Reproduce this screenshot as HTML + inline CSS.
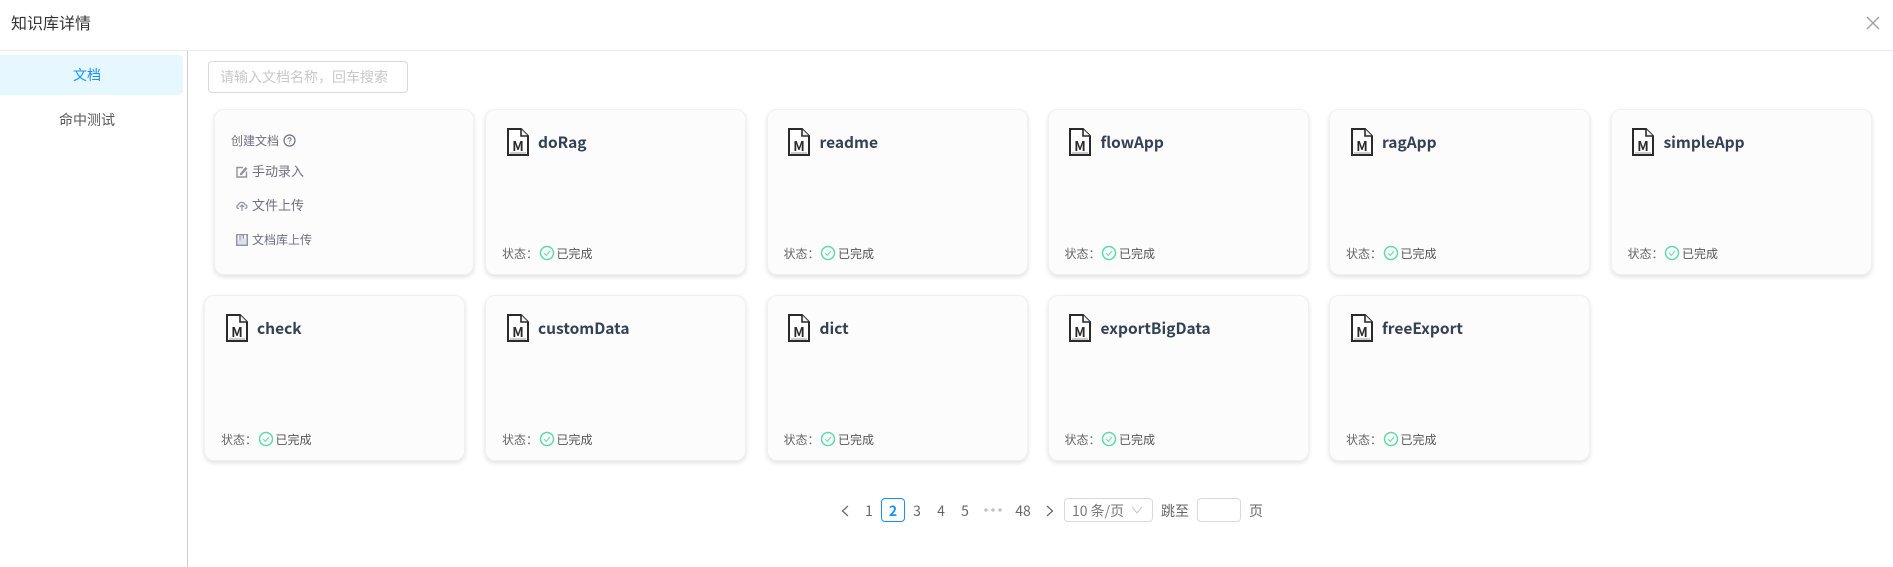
<!DOCTYPE html>
<html lang="zh"><head><meta charset="utf-8"><title>知识库详情</title>
<style>
*{box-sizing:border-box}
html,body{margin:0;padding:0;width:1893px;height:567px;overflow:hidden;background:#fff}
body{position:relative;font-family:"Noto Sans CJK SC","Liberation Sans",sans-serif;color:#555}
.a{position:absolute;white-space:nowrap;line-height:20px}
.card{position:absolute;width:261px;height:166px;background:#fcfcfc;border:1px solid #f0f0f0;border-radius:10px;box-shadow:0 2px 5px rgba(0,0,0,.12)}
.card svg.d{position:absolute;left:20.5px;top:18px}
.card .t{position:absolute;left:52px;top:20.5px;font-size:15.5px;font-weight:700;line-height:22px;color:#344054;white-space:nowrap}
.card .s{position:absolute;left:16px;top:134px;font-size:12px;line-height:20px;color:#666;white-space:nowrap}
.card .k{position:absolute;left:52.5px;top:135px;width:16px;height:16px}
.card .c{position:absolute;left:70.5px;top:134px;font-size:12px;line-height:20px;color:#555;white-space:nowrap}
.p{position:absolute;top:501px;font-size:14px;line-height:20px;color:#666;transform:translateX(-50%)}
.b{position:absolute;border:1px solid #d9d9d9;border-radius:4px;background:#fff}
.m{position:absolute;font-size:13px;line-height:20px;color:#6d7080;white-space:nowrap}
</style></head><body>
<svg width="0" height="0" style="position:absolute"><defs>
<symbol id="doc" viewBox="0 0 22 28"><path d="M1 1H14L21 8V27H1Z" fill="#fff" stroke="#2a2a2a" stroke-width="2"/><path d="M14 1V8H21" fill="#f4f4f4" stroke="#2a2a2a" stroke-width="1.6"/><path d="M3 25H19" stroke="#bbb" stroke-width="1.5"/></symbol>
<symbol id="ok" viewBox="0 0 16 16"><circle cx="8" cy="8" r="6.5" fill="none" stroke="#5fd8ac" stroke-width="1.5"/><path d="M5 8.2L7.3 10.4 11 5.9" fill="none" stroke="#5fd8ac" stroke-width="1"/></symbol>
</defs></svg>

<div class="a" style="left:11px;top:12px;font-size:16px;color:#333">知识库详情</div>
<svg class="a" style="left:1866px;top:16px" width="14" height="14" viewBox="0 0 14 14"><path d="M1 1L13 13M13 1L1 13" stroke="#a0a0a0" stroke-width="1.4" fill="none"/></svg>
<div class="a" style="left:0;top:50px;width:1893px;height:1px;background:#ececec"></div>
<div class="a" style="left:187px;top:51px;width:1px;height:516px;background:#d0d0d0"></div>

<div class="a" style="left:0;top:55px;width:183px;height:40px;background:#e6f7ff;border-radius:0 4px 4px 0"></div>
<div class="a" style="left:73px;top:65px;font-size:14px;color:#1890ff">文档</div>
<div class="a" style="left:59px;top:110px;font-size:14px;color:#595959">命中测试</div>

<div class="b" style="left:208px;top:61px;width:200px;height:32px"></div>
<div class="a" style="left:220px;top:67px;font-size:14px;color:#c8c8c8">请输入文档名称，回车搜索</div>

<!-- Create card -->
<div class="card" style="left:214px;top:109px;width:260px">
  <div class="a" style="left:16px;top:21px;font-size:12px;color:#6d7080">创建文档</div>
  <svg class="a" style="left:68px;top:24px" width="13" height="13" viewBox="0 0 13 13"><circle cx="6.5" cy="6.5" r="5.5" fill="none" stroke="#6d7080" stroke-width="1.2"/><path d="M4.9 5.2C4.9 3.2 8.1 3.2 8.1 5.2C8.1 6.4 6.5 6.3 6.5 7.7M6.5 8.8V9.8" fill="none" stroke="#6d7080"/></svg>
  <svg class="a" style="left:21px;top:56px" width="12" height="12" viewBox="0 0 12 12"><path d="M7 1.5H1V11H10.5V5.5" fill="none" stroke="#8f93a3" stroke-width="1.4"/><path d="M4 7.5L9.5 1L11.5 2.6L5.8 9L3.9 9.3Z" fill="#8f93a3"/></svg>
  <div class="m" style="top:51px;left:37px">手动录入</div>
  <svg class="a" style="left:21px;top:90px" width="12" height="12" viewBox="0 0 12 12"><path d="M3 8.5H2.6C.2 8.3.2 5 2.6 4.8C3.2 1.6 8.4 1.6 9 4.8C11.6 5 11.6 8.3 9 8.5H8.8M3.8 7L6 4.9L8.2 7M6 5V11" fill="none" stroke="#8f93a3" stroke-width="1.2"/></svg>
  <div class="m" style="top:85px;left:37px">文件上传</div>
  <svg class="a" style="left:21px;top:124px" width="12" height="12" viewBox="0 0 12 12"><rect x=".7" y=".7" width="10.6" height="10.6" fill="#dfe1e8" stroke="#8f93a3" stroke-width="1.4"/><path d="M2 6.5V1H10V4.5H7.5V1H5V6.5Z" fill="#fcfcfc"/><path d="M4 1V6.5M7.5 1V4.5" stroke="#8f93a3" stroke-width="1.2"/></svg>
  <div class="m" style="top:120px;left:37px;font-size:12px">文档库上传</div>
</div>

<!-- Row 1 -->
<div class="card" style="left:485px;top:109px"><svg class="d" width="22" height="28"><use href="#doc"/><text x="11" y="23" text-anchor="middle" font-size="13.5" font-weight="700" fill="#2a2a2a" font-family="Noto Sans CJK SC,sans-serif">M</text></svg><div class="t">doRag</div><div class="s">状态：</div><svg class="k"><use href="#ok"/></svg><div class="c">已完成</div></div>
<div class="card" style="left:766.5px;top:109px"><svg class="d" width="22" height="28"><use href="#doc"/><text x="11" y="23" text-anchor="middle" font-size="13.5" font-weight="700" fill="#2a2a2a" font-family="Noto Sans CJK SC,sans-serif">M</text></svg><div class="t">readme</div><div class="s">状态：</div><svg class="k"><use href="#ok"/></svg><div class="c">已完成</div></div>
<div class="card" style="left:1047.5px;top:109px"><svg class="d" width="22" height="28"><use href="#doc"/><text x="11" y="23" text-anchor="middle" font-size="13.5" font-weight="700" fill="#2a2a2a" font-family="Noto Sans CJK SC,sans-serif">M</text></svg><div class="t">flowApp</div><div class="s">状态：</div><svg class="k"><use href="#ok"/></svg><div class="c">已完成</div></div>
<div class="card" style="left:1329px;top:109px"><svg class="d" width="22" height="28"><use href="#doc"/><text x="11" y="23" text-anchor="middle" font-size="13.5" font-weight="700" fill="#2a2a2a" font-family="Noto Sans CJK SC,sans-serif">M</text></svg><div class="t">ragApp</div><div class="s">状态：</div><svg class="k"><use href="#ok"/></svg><div class="c">已完成</div></div>
<div class="card" style="left:1610.5px;top:109px"><svg class="d" width="22" height="28"><use href="#doc"/><text x="11" y="23" text-anchor="middle" font-size="13.5" font-weight="700" fill="#2a2a2a" font-family="Noto Sans CJK SC,sans-serif">M</text></svg><div class="t">simpleApp</div><div class="s">状态：</div><svg class="k"><use href="#ok"/></svg><div class="c">已完成</div></div>

<!-- Row 2 -->
<div class="card" style="left:204px;top:295px"><svg class="d" width="22" height="28"><use href="#doc"/><text x="11" y="23" text-anchor="middle" font-size="13.5" font-weight="700" fill="#2a2a2a" font-family="Noto Sans CJK SC,sans-serif">M</text></svg><div class="t">check</div><div class="s">状态：</div><svg class="k"><use href="#ok"/></svg><div class="c">已完成</div></div>
<div class="card" style="left:485px;top:295px"><svg class="d" width="22" height="28"><use href="#doc"/><text x="11" y="23" text-anchor="middle" font-size="13.5" font-weight="700" fill="#2a2a2a" font-family="Noto Sans CJK SC,sans-serif">M</text></svg><div class="t">customData</div><div class="s">状态：</div><svg class="k"><use href="#ok"/></svg><div class="c">已完成</div></div>
<div class="card" style="left:766.5px;top:295px"><svg class="d" width="22" height="28"><use href="#doc"/><text x="11" y="23" text-anchor="middle" font-size="13.5" font-weight="700" fill="#2a2a2a" font-family="Noto Sans CJK SC,sans-serif">M</text></svg><div class="t">dict</div><div class="s">状态：</div><svg class="k"><use href="#ok"/></svg><div class="c">已完成</div></div>
<div class="card" style="left:1047.5px;top:295px"><svg class="d" width="22" height="28"><use href="#doc"/><text x="11" y="23" text-anchor="middle" font-size="13.5" font-weight="700" fill="#2a2a2a" font-family="Noto Sans CJK SC,sans-serif">M</text></svg><div class="t">exportBigData</div><div class="s">状态：</div><svg class="k"><use href="#ok"/></svg><div class="c">已完成</div></div>
<div class="card" style="left:1329px;top:295px"><svg class="d" width="22" height="28"><use href="#doc"/><text x="11" y="23" text-anchor="middle" font-size="13.5" font-weight="700" fill="#2a2a2a" font-family="Noto Sans CJK SC,sans-serif">M</text></svg><div class="t">freeExport</div><div class="s">状态：</div><svg class="k"><use href="#ok"/></svg><div class="c">已完成</div></div>

<!-- Pagination -->
<svg class="a" style="left:841px;top:505px" width="8" height="12" viewBox="0 0 8 12"><path d="M7 1L1.5 6L7 11" fill="none" stroke="#666" stroke-width="1.2"/></svg>
<div class="p" style="left:869px">1</div>
<div class="b" style="left:881px;top:498px;width:24px;height:24px;border-color:#1890ff"></div>
<div class="p" style="left:893px;color:#1890ff;font-weight:700">2</div>
<div class="p" style="left:917px">3</div>
<div class="p" style="left:941px">4</div>
<div class="p" style="left:965px">5</div>
<svg class="a" style="left:984px;top:508px" width="18" height="4" viewBox="0 0 18 4"><circle cx="2" cy="2" r="1.8" fill="#c4c4c4"/><circle cx="9" cy="2" r="1.8" fill="#c4c4c4"/><circle cx="16" cy="2" r="1.8" fill="#c4c4c4"/></svg>
<div class="p" style="left:1023px">48</div>
<svg class="a" style="left:1046px;top:505px" width="8" height="12" viewBox="0 0 8 12"><path d="M1 1L6.5 6L1 11" fill="none" stroke="#666" stroke-width="1.2"/></svg>
<div class="b" style="left:1064px;top:498px;width:89px;height:24px"></div>
<div class="a" style="left:1072px;top:501px;font-size:14px;color:#777">10 条/页</div>
<svg class="a" style="left:1131px;top:506px" width="12" height="8" viewBox="0 0 12 8"><path d="M1 1L6 7L11 1" fill="none" stroke="#c8c8c8" stroke-width="1"/></svg>
<div class="a" style="left:1161px;top:501px;font-size:14px;color:#666">跳至</div>
<div class="b" style="left:1197px;top:498px;width:44px;height:24px"></div>
<div class="a" style="left:1249px;top:501px;font-size:14px;color:#666">页</div>
</body></html>
